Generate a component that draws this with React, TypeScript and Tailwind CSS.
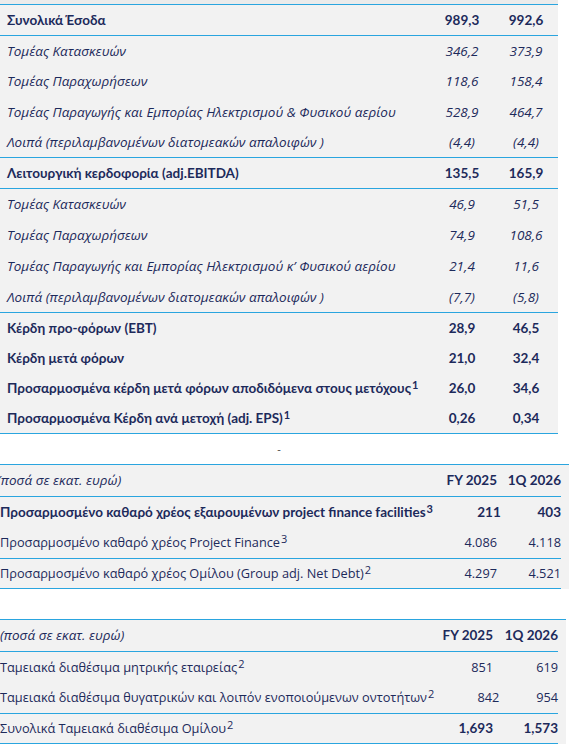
import React from "react";

const navy = "text-[#1d2a5b]";
const bold = "font-['Lato',_'Liberation_Sans',_sans-serif] font-bold text-[13.5px]";
const thin = "font-['Open_Sans',_'Noto_Sans',_sans-serif] text-[12.75px]";
const slant = "font-['Open_Sans',_'Noto_Sans',_sans-serif] text-[13.5px] italic";
const line = "border-[#2aa5df]";

type Line = { label: React.ReactNode; a: string; b: string; kind: "bold" | "italic" };

const Sup = ({ n }: { n: string }) => (
  <sup className="text-[11px] relative -top-[4px] ml-[1px]">{n}</sup>
);

const revenue: Line[] = [
  { label: "Τομέας Κατασκευών", a: "346,2", b: "373,9", kind: "italic" },
  { label: "Τομέας Παραχωρήσεων", a: "118,6", b: "158,4", kind: "italic" },
  {
    label: "Τομέας Παραγωγής και Εμπορίας Ηλεκτρισμού & Φυσικού αερίου",
    a: "528,9",
    b: "464,7",
    kind: "italic",
  },
  {
    label: "Λοιπά (περιλαμβανομένων διατομεακών απαλοιφών )",
    a: "(4,4)",
    b: "(4,4)",
    kind: "italic",
  },
];

const ebitda: Line[] = [
  { label: "Τομέας Κατασκευών", a: "46,9", b: "51,5", kind: "italic" },
  { label: "Τομέας Παραχωρήσεων", a: "74,9", b: "108,6", kind: "italic" },
  {
    label: "Τομέας Παραγωγής και Εμπορίας Ηλεκτρισμού κ’ Φυσικού αερίου",
    a: "21,4",
    b: "11,6",
    kind: "italic",
  },
  {
    label: "Λοιπά (περιλαμβανομένων διατομεακών απαλοιφών )",
    a: "(7,7)",
    b: "(5,8)",
    kind: "italic",
  },
];

const profits: Line[] = [
  { label: "Κέρδη προ-φόρων (EBT)", a: "28,9", b: "46,5", kind: "bold" },
  { label: "Κέρδη μετά φόρων", a: "21,0", b: "32,4", kind: "bold" },
  {
    label: (
      <>
        Προσαρμοσμένα κέρδη μετά φόρων αποδιδόμενα στους μετόχους<Sup n="1" />
      </>
    ),
    a: "26,0",
    b: "34,6",
    kind: "bold",
  },
  {
    label: (
      <>
        Προσαρμοσμένα Κέρδη ανά μετοχή (adj. EPS)<Sup n="1" />
      </>
    ),
    a: "0,26",
    b: "0,34",
    kind: "bold",
  },
];

function Row({ line: l, h }: { line: Line; h: string }) {
  const font = l.kind === "bold" ? bold : slant;
  return (
    <div className={`flex items-center ${h} ${font}`}>
      <div className="flex-1 pl-[7px] whitespace-nowrap">{l.label}</div>
      <div className="w-[64px] text-center">{l.a}</div>
      <div className="w-[64px] text-center">{l.b}</div>
    </div>
  );
}

function Section({ head, rows, rowH, bodyH }: { head: Line; rows: Line[]; rowH: string; bodyH: string }) {
  return (
    <div className={`border-b ${line}`}>
      <div className={`border-b ${line}`}>
        <Row line={head} h="h-[30px]" />
      </div>
      <div className={`${bodyH} flex flex-col`}>
        {rows.map((r, i) => (
          <Row key={i} line={r} h={rowH} />
        ))}
      </div>
    </div>
  );
}

function DebtRow({
  label,
  a,
  b,
  strong,
  h = "h-[30.5px]",
  colB = "w-[64px]",
}: {
  label: React.ReactNode;
  a: string;
  b: string;
  strong?: boolean;
  h?: string;
  colB?: string;
}) {
  return (
    <div className={`flex items-center ${h} ${strong ? bold : thin}`}>
      <div className="flex-1 whitespace-nowrap">{label}</div>
      <div className="w-[72px] text-right">{a}</div>
      <div className={`${colB} text-right`}>{b}</div>
    </div>
  );
}

export default function App() {
  return (
    <div className={`w-[573px] h-[750px] bg-white overflow-hidden ${navy}`}>
      <div className="w-[558px] h-[4px] bg-[#ebebeb]" />
      <div className={`w-[558px] bg-[#f2f2f2] border-t ${line}`}>
        <Section
          head={{ label: "Συνολικά Έσοδα", a: "989,3", b: "992,6", kind: "bold" }}
          rows={revenue}
          rowH="h-[30.25px]"
          bodyH="h-[121px]"
        />
        <Section
          head={{
            label: "Λειτουργική κερδοφορία (adj.EBITDA)",
            a: "135,5",
            b: "165,9",
            kind: "bold",
          }}
          rows={ebitda}
          rowH="h-[30.75px]"
          bodyH="h-[123px]"
        />
        <div className={`h-[121px] border-b ${line}`}>
          {profits.map((r, i) => (
            <Row key={i} line={r} h="h-[30px]" />
          ))}
        </div>
      </div>

      <div className="w-[558px] h-[30px] flex items-center justify-center text-[11px] font-['Open_Sans',_sans-serif] text-[#444]">
        -
      </div>

      <div className={`w-[569px] bg-[#f2f2f2] border-t ${line} pr-[8px]`}>
        <div className={`flex items-center h-[32px] border-b ${line}`}>
          <div className={`flex-1 -ml-[3px] ${slant}`}>(ποσά σε εκατ. ευρώ)</div>
          <div className={`w-[72px] text-right ${bold}`}>FY 2025</div>
          <div className={`w-[64px] text-right ${bold}`}>1Q 2026</div>
        </div>
        <div className={`h-[62px] border-b ${line}`}>
          <DebtRow
            strong
            label={
              <>
                Προσαρμοσμένο καθαρό χρέος εξαιρουμένων project finance facilities
                <Sup n="3" />
              </>
            }
            a="211"
            b="403"
          />
          <DebtRow
            label={
              <>
                Προσαρμοσμένο καθαρό χρέος Project Finance<Sup n="3" />
              </>
            }
            a="4.086"
            b="4.118"
          />
        </div>
        <div className={`border-b ${line}`}>
          <DebtRow
            h="h-[29px]"
            label={
              <>
                Προσαρμοσμένο καθαρό χρέος Ομίλου (Group adj. Net Debt)<Sup n="2" />
              </>
            }
            a="4.297"
            b="4.521"
          />
        </div>
      </div>

      <div className="h-[30px]" />

      <div className={`w-[566px] bg-[#f2f2f2] border-t ${line} pr-[8px]`}>
        <div className={`flex items-center h-[32px] border-b ${line}`}>
          <div className={`flex-1 ${slant}`}>(ποσά σε εκατ. ευρώ)</div>
          <div className={`w-[72px] text-right ${bold}`}>FY 2025</div>
          <div className={`w-[65px] text-right ${bold}`}>1Q 2026</div>
        </div>
        <div className={`h-[62px] border-b ${line}`}>
          <DebtRow
            colB="w-[65px]"
            label={
              <>
                Ταμειακά διαθέσιμα μητρικής εταιρείας<Sup n="2" />
              </>
            }
            a="851"
            b="619"
          />
          <DebtRow
            colB="w-[65px]"
            label={
              <>
                Ταμειακά διαθέσιμα θυγατρικών και λοιπόν ενοποιούμενων οντοτήτων
                <Sup n="2" />
              </>
            }
            a="842"
            b="954"
          />
        </div>
        <div className={`flex items-center h-[30px] border-b ${line} ${thin}`}>
          <div className="flex-1 whitespace-nowrap">
            Συνολικά Ταμειακά διαθέσιμα Ομίλου<Sup n="2" />
          </div>
          <div className={`w-[72px] text-right ${bold}`}>1,693</div>
          <div className={`w-[65px] text-right ${bold}`}>1,573</div>
        </div>
      </div>
    </div>
  );
}
